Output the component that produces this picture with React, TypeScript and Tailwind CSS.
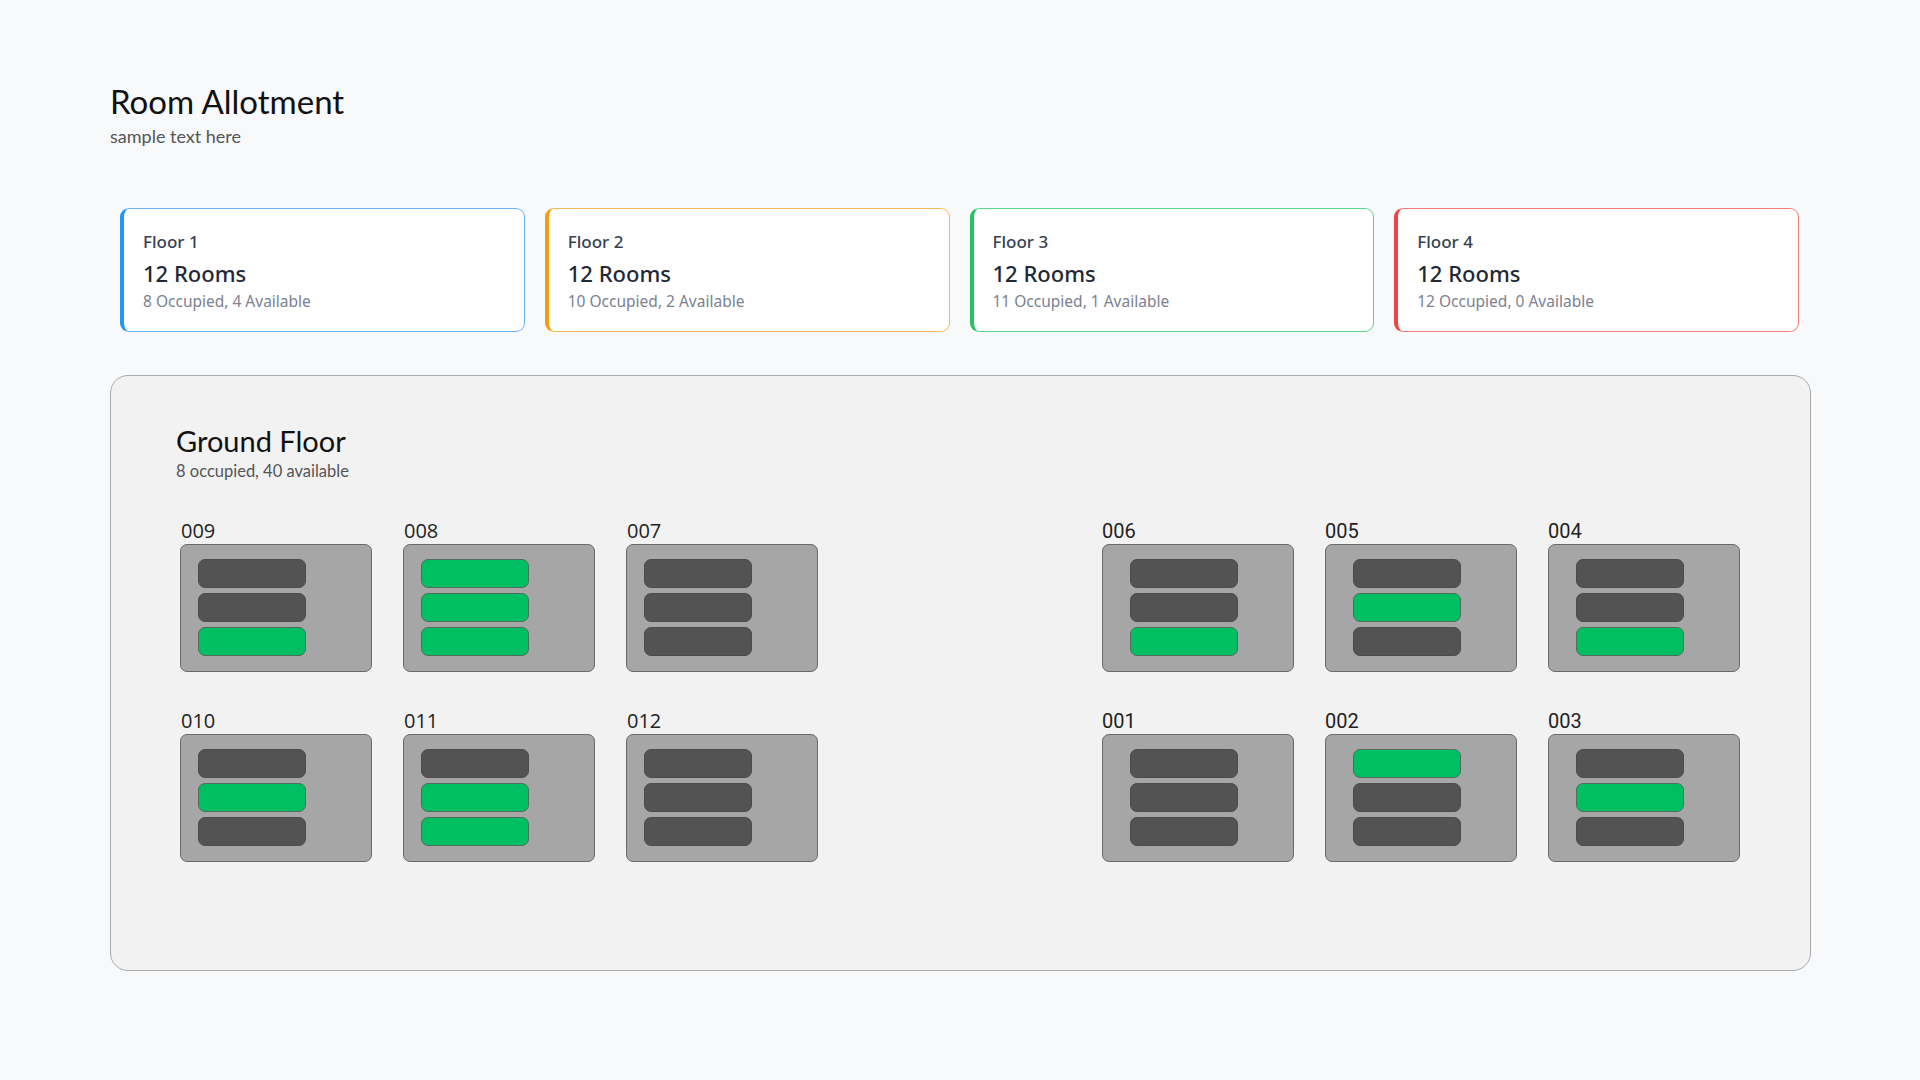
import React from "react";

type Bar = "d" | "g";
type Room = { id: string; bars: Bar[] };

const floors = [
  { name: "Floor 1", sub: "8 Occupied, 4 Available", cls: "border-[#6ab4f5] border-l-[#2196f3]" },
  { name: "Floor 2", sub: "10 Occupied, 2 Available", cls: "border-[#f7bb55] border-l-[#f59e0b]" },
  { name: "Floor 3", sub: "11 Occupied, 1 Available", cls: "border-[#5ad68a] border-l-[#22c55e]" },
  { name: "Floor 4", sub: "12 Occupied, 0 Available", cls: "border-[#f47a7a] border-l-[#ef4444]" },
];

const leftRows: Room[][] = [
  [
    { id: "009", bars: ["d", "d", "g"] },
    { id: "008", bars: ["g", "g", "g"] },
    { id: "007", bars: ["d", "d", "d"] },
  ],
  [
    { id: "010", bars: ["d", "g", "d"] },
    { id: "011", bars: ["d", "g", "g"] },
    { id: "012", bars: ["d", "d", "d"] },
  ],
];

const rightRows: Room[][] = [
  [
    { id: "006", bars: ["d", "d", "g"] },
    { id: "005", bars: ["d", "g", "d"] },
    { id: "004", bars: ["d", "d", "g"] },
  ],
  [
    { id: "001", bars: ["d", "d", "d"] },
    { id: "002", bars: ["g", "d", "d"] },
    { id: "003", bars: ["d", "g", "d"] },
  ],
];

function RoomBox({ room, side }: { room: Room; side: "l" | "r" }) {
  return (
    <div className="flex flex-col">
      <div
        className={
          side === "l"
            ? "pl-[1px] text-[20px] leading-[22px] text-[#222] mb-[2px] [font-family:'Open_Sans',sans-serif]"
            : "text-[20px] leading-[22px] text-[#222] mb-[2px] [font-family:Roboto,sans-serif]"
        }
      >
        {room.id}
      </div>
      <div
        className={
          side === "l"
            ? "w-[192px] h-[128px] rounded-[7px] border border-[#6a6a6a] bg-[#a6a6a6] pt-[14px] pl-[17px] flex flex-col gap-[5px]"
            : "w-[192px] h-[128px] rounded-[7px] border border-[#6a6a6a] bg-[#a6a6a6] pt-[14px] pl-[27px] flex flex-col gap-[5px]"
        }
      >
        {room.bars.map((b, i) => (
          <div
            key={i}
            className={
              b === "g"
                ? "w-[108px] h-[29px] rounded-[7px] bg-[#00bf63] border border-[#4f6f5c]"
                : "w-[108px] h-[29px] rounded-[7px] bg-[#535353] border border-[#4c4c4c]"
            }
          />
        ))}
      </div>
    </div>
  );
}

function Group({ rows, side }: { rows: Room[][]; side: "l" | "r" }) {
  return (
    <div className="flex flex-col gap-[38px]">
      {rows.map((row, i) => (
        <div key={i} className="flex gap-[31px]">
          {row.map((r) => (
            <RoomBox key={r.id} room={r} side={side} />
          ))}
        </div>
      ))}
    </div>
  );
}

export default function App() {
  return (
    <div className="min-h-[1080px] w-[1920px] bg-[#f8f9fb] pl-[110px] pr-[109px] pt-[82px]">
      <div className="[font-family:Lato,sans-serif]">
        <h1 className="text-[33px] leading-[38px] font-normal text-[#111]">Room Allotment</h1>
        <p className="text-[18px] leading-[22px] text-[#555] mt-[5px]">sample text here</p>
      </div>

      <div className="mt-[61px] pl-[10px] pr-[12px] grid grid-cols-4 gap-[20px] [font-family:'Noto_Sans',sans-serif]">
        {floors.map((f) => (
          <div
            key={f.name}
            className={`h-[124px] rounded-[9px] border-[1.5px] border-l-[4px] bg-white pl-[19px] pt-[21px] ${f.cls}`}
          >
            <div className="text-[17px] leading-[24px] font-medium text-[#374151]">{f.name}</div>
            <div className="mt-[4px] text-[22px] leading-[30px] font-medium text-[#1f2937]">12 Rooms</div>
            <div className="mt-[3px] text-[15.5px] leading-[20px] text-[#7b8190]">{f.sub}</div>
          </div>
        ))}
      </div>

      <div className="mt-[43px] h-[596px] rounded-[18px] border border-[#aaaaaa] bg-[#f2f2f2] pl-[67px] pr-[70px] pt-[47px]">
        <div className="-ml-[2px] [font-family:Lato,sans-serif]">
          <h2 className="text-[29px] leading-[36px] text-[#111]">Ground Floor</h2>
          <p className="text-[16.5px] leading-[20px] text-[#555] mt-[2px]">8 occupied, 40 available</p>
        </div>
        <div className="mt-[39px] pl-[2px] flex justify-between">
          <Group rows={leftRows} side="l" />
          <Group rows={rightRows} side="r" />
        </div>
      </div>
    </div>
  );
}
